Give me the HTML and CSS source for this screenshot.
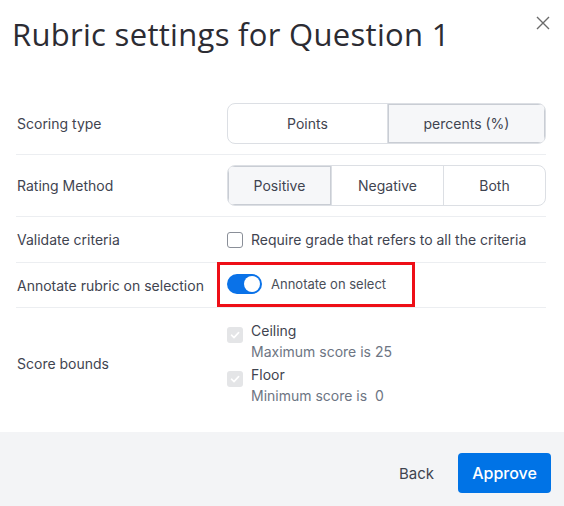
FILE: index.html
```html
<!DOCTYPE html>
<html>
<head>
<meta charset="utf-8">
<link rel="stylesheet" href="styles.css">
</head>
<body>
<div class="dialog">
  <header class="head">
    <h1 class="title">Rubric settings for Question 1</h1>
    <button class="close" aria-label="Close">
      <svg width="14" height="14" viewBox="0 0 14 14"><path d="M1 1 L13 13 M13 1 L1 13" stroke="#6b6b6b" stroke-width="1.4" fill="none"/></svg>
    </button>
  </header>
  <div class="body">
    <div class="row r1">
      <div class="label">Scoring type</div>
      <div class="seg">
        <span class="opt">Points</span>
        <span class="opt on">percents (%)</span>
      </div>
    </div>
    <div class="row r2">
      <div class="label">Rating Method</div>
      <div class="seg three">
        <span class="opt on">Positive</span>
        <span class="opt">Negative</span>
        <span class="opt">Both</span>
      </div>
    </div>
    <div class="row r3">
      <div class="label">Validate criteria</div>
      <div class="check-line">
        <span class="box"></span>
        <span class="ctext">Require grade that refers to all the criteria</span>
      </div>
    </div>
    <div class="row r4">
      <div class="label">Annotate rubric on selection</div>
      <div class="annot">
        <span class="toggle"><span class="knob"></span></span>
        <span class="ttext">Annotate on select</span>
      </div>
    </div>
    <div class="row r5">
      <div class="label">Score bounds</div>
      <div class="bounds">
        <div class="bound">
          <span class="dbox"><svg width="12" height="12" viewBox="0 0 12 12"><path d="M2.5 6.2 L5 8.6 L9.6 3.6" stroke="#fff" stroke-width="1.6" fill="none" stroke-linecap="round" stroke-linejoin="round"/></svg></span>
          <div class="btext"><div class="bname">Ceiling</div><div class="bsub">Maximum score is&nbsp;25</div></div>
        </div>
        <div class="bound">
          <span class="dbox"><svg width="12" height="12" viewBox="0 0 12 12"><path d="M2.5 6.2 L5 8.6 L9.6 3.6" stroke="#fff" stroke-width="1.6" fill="none" stroke-linecap="round" stroke-linejoin="round"/></svg></span>
          <div class="btext"><div class="bname">Floor</div><div class="bsub">Minimum score is&nbsp;&nbsp;0</div></div>
        </div>
      </div>
    </div>
  </div>
  <footer class="foot">
    <button class="back">Back</button>
    <button class="approve">Approve</button>
  </footer>
</div>
</body>
</html>
```
FILE: styles.css
```css
html, body {
  margin: 0;
  padding: 0;
  background: #ffffff;
}
body {
  font-family: Inter, "Liberation Sans", sans-serif;
  color: #3d424d;
  font-size: 14px;
}
.dialog {
  width: 564px;
  height: 506px;
  display: flex;
  flex-direction: column;
  background: #fff;
}
.head {
  display: flex;
  justify-content: space-between;
  align-items: flex-start;
  padding: 14px 14px 0 12px;
  height: 79px;
  box-sizing: border-box;
}
.title {
  margin: 0;
  font-family: "Open Sans", sans-serif;
  font-weight: 500;
  font-size: 31px;
  line-height: 40px;
  color: #2c2c33;
  letter-spacing: 0.3px;
}
.close {
  border: 0;
  background: none;
  padding: 0;
  margin-top: 2px;
  width: 14px;
  height: 14px;
  display: flex;
}
.body {
  padding: 0 18px 0 16px;
  flex: 1;
}
.row {
  display: flex;
  align-items: center;
  border-bottom: 1px solid #eceef1;
}
.r1 { padding: 24px 0 10px; }
.r2 { padding: 10px 0 10px; }
.r3 { height: 45px; }
.r4 { height: 44px; }
.r5 { border-bottom: 0; padding: 13px 0 0; }
.label {
  width: 210px;
  padding-left: 1px;
  flex: none;
  color: #3f4450;
}
.seg {
  flex: 1;
  display: flex;
  height: 41px;
  border: 1px solid #dcdfe4;
  border-radius: 8px;
  box-sizing: border-box;
  overflow: hidden;
}
.opt {
  flex: 1;
  display: flex;
  align-items: center;
  justify-content: center;
  color: #3f4450;
  border-left: 1px solid #dcdfe4;
}
.opt:first-child { border-left: 0; }
.opt.on {
  background: #f6f7f9;
  box-shadow: inset 0 0 0 1px #c9cdd4;
}
.seg .opt:nth-child(1) { flex: 0 0 159px; }
.seg.three .opt:nth-child(1) { flex: 0 0 103px; }
.seg.three .opt:nth-child(2) { flex: 0 0 111px; }
.check-line {
  display: flex;
  align-items: center;
  gap: 8px;
}
.box {
  width: 16px;
  height: 16px;
  border: 1px solid #8a8f98;
  border-radius: 3px;
  box-sizing: border-box;
}
.ctext { color: #3f4450; }
.annot {
  display: flex;
  align-items: center;
  gap: 9px;
  margin-left: -10px;
  width: 198px;
  height: 45px;
  box-sizing: border-box;
  border: 3px solid #ee0f17;
  padding-left: 7px;
  position: relative;
  top: -1px;
}
.toggle {
  width: 35px;
  height: 20px;
  border-radius: 10px;
  background: #0a72e8;
  position: relative;
  flex: none;
}
.knob {
  position: absolute;
  right: 2px;
  top: 2px;
  width: 16px;
  height: 16px;
  border-radius: 50%;
  background: #fff;
}
.ttext { color: #4a4f59; font-size: 13px; }
.bounds {
  display: flex;
  flex-direction: column;
  gap: 3px;
}
.bound {
  display: flex;
  align-items: flex-start;
  gap: 8px;
}
.dbox {
  width: 16px;
  height: 16px;
  border-radius: 3px;
  background: #e4e5e7;
  margin-top: 6px;
  display: flex;
  align-items: center;
  justify-content: center;
}
.bname { line-height: 20px; color: #3f4450; }
.bsub { line-height: 21px; color: #6d7583; }
.foot {
  height: 74px;
  background: #f3f4f6;
  display: flex;
  align-items: center;
  justify-content: flex-end;
  padding-right: 13px;
  gap: 24px;
}
.back {
  border: 0;
  background: none;
  font-family: Inter, sans-serif;
  font-size: 15px;
  color: #3f4450;
  padding: 0;
  margin-top: 8px;
}
.approve {
  border: 0;
  background: #0073e6;
  color: #fff;
  font-family: Inter, sans-serif;
  font-size: 16px;
  font-weight: 500;
  width: 93px;
  height: 40px;
  border-radius: 4px;
  margin-top: 8px;
}
```
